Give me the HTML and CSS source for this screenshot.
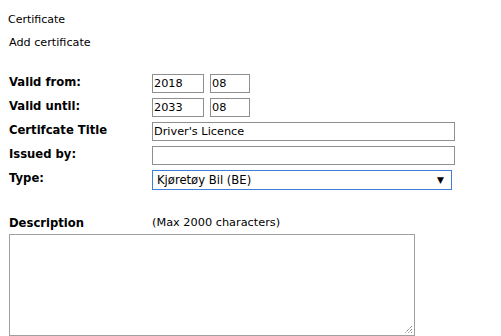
FILE: index.html
```html
<!DOCTYPE html>
<html>
<head>
<meta charset="utf-8">
<link rel="stylesheet" href="styles.css">
</head>
<body>
<div class="page">
  <div class="crumb">Certificate</div>
  <div class="subtitle">Add certificate</div>
  <div class="form">
    <div class="label">Valid from:</div>
    <div class="field pair"><div class="input year">2018</div><div class="input month">08</div></div>
    <div class="label">Valid until:</div>
    <div class="field pair"><div class="input year">2033</div><div class="input month">08</div></div>
    <div class="label">Certifcate Title</div>
    <div class="field"><div class="input wide">Driver's Licence</div></div>
    <div class="label">Issued by:</div>
    <div class="field"><div class="input wide"></div></div>
    <div class="label">Type:</div>
    <div class="field"><div class="select"><span>Kjøretøy Bil (BE)</span><span class="arrow">▼</span></div></div>
  </div>
  <div class="desc-head">
    <div class="label">Description</div>
    <div class="hint">(Max 2000 characters)</div>
  </div>
  <div class="textarea">
    <svg class="grip" width="9" height="9" viewBox="0 0 9 9"><path d="M8 1 L1 8 M8 4 L4 8 M8 7 L7 8" stroke="#555" stroke-width="1" stroke-dasharray="1 1" fill="none"/></svg>
  </div>
</div>
</body>
</html>
```

FILE: styles.css
```css
html, body {
  margin: 0;
  padding: 0;
  background: #fff;
}
body {
  font-family: "DejaVu Sans", Verdana, sans-serif;
  font-size: 11px;
  color: #000;
}
.page {
  padding: 12px 0 0 8px;
}
.crumb {
  height: 16px;
  line-height: 16px;
}
.subtitle {
  margin-top: 7px;
  padding-left: 1px;
  height: 16px;
  line-height: 16px;
  font-size: 11.2px;
}
.form {
  margin-top: 23px;
  padding-left: 1px;
  display: grid;
  grid-template-columns: 143px 303px;
  row-gap: 5px;
}
.label {
  font-weight: bold;
  font-size: 11.6px;
  padding-top: 1px;
  line-height: 14px;
}
.field {
  display: flex;
  gap: 6px;
}
.input {
  box-sizing: border-box;
  height: 19px;
  border: 1px solid #8f8f8f;
  padding: 0 1px;
  line-height: 17px;
  font-size: 11.3px;
}
.year { width: 52px; }
.month { width: 40px; }
.wide { width: 303px; }
.select {
  box-sizing: border-box;
  width: 300px;
  height: 20px;
  border: 1px solid #3c7fd9;
  padding: 0 7px 0 4px;
  display: flex;
  justify-content: space-between;
  align-items: center;
  font-size: 11.6px;
}
.arrow {
  font-size: 9px;
}
.desc-head {
  margin-top: 25px;
  padding-left: 1px;
  display: flex;
}
.desc-head .label {
  width: 143px;
}
.hint {
  padding-top: 1px;
  line-height: 14px;
  font-size: 11.3px;
}
.textarea {
  box-sizing: border-box;
  margin: 4px 0 0 1px;
  width: 406px;
  height: 102px;
  border: 1px solid #a0a0a0;
  position: relative;
}
.grip {
  position: absolute;
  right: 1px;
  bottom: 1px;
}
```
